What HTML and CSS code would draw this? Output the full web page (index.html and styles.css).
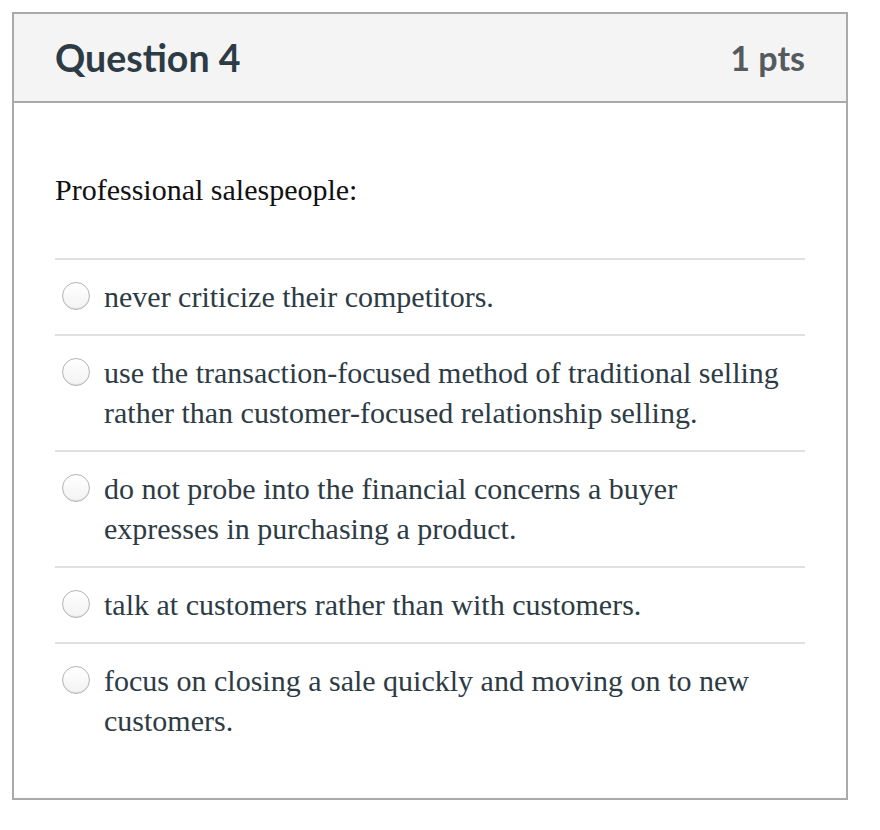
FILE: index.html
```html
<!DOCTYPE html>
<html>
<head>
<meta charset="utf-8">
<link rel="stylesheet" href="styles.css">
</head>
<body>
<div class="card">
  <div class="header">
    <h2 class="title">Question 4</h2>
    <span class="pts">1 pts</span>
  </div>
  <div class="content">
    <p class="question">Professional salespeople:</p>
    <div class="answers">
      <label class="answer"><span class="radio"></span><span class="text">never criticize their competitors.</span></label>
      <label class="answer"><span class="radio"></span><span class="text">use the transaction-focused method of traditional selling rather than customer-focused relationship selling.</span></label>
      <label class="answer"><span class="radio"></span><span class="text">do not probe into the financial concerns a buyer expresses in purchasing a product.</span></label>
      <label class="answer"><span class="radio"></span><span class="text">talk at customers rather than with customers.</span></label>
      <label class="answer"><span class="radio"></span><span class="text">focus on closing a sale quickly and moving on to new customers.</span></label>
    </div>
  </div>
</div>
</body>
</html>
```
FILE: styles.css
```css
html, body {
  margin: 0;
  padding: 0;
  background: #fff;
}
.card {
  margin: 12px;
  width: 836px;
  height: 788px;
  box-sizing: border-box;
  border: 2px solid #aaaaaa;
}
.header {
  height: 87px;
  background: #f4f4f4;
  border-bottom: 2px solid #aaaaaa;
  display: flex;
  align-items: center;
  justify-content: space-between;
  padding: 0 41px;
  font-family: Lato, sans-serif;
  font-weight: 700;
}
.title {
  margin: 0;
  font-size: 37.5px;
  font-weight: 700;
  color: #2d3b45;
}
.pts {
  font-size: 34px;
  color: #555a5e;
}
.content {
  padding: 67px 41px 0;
  font-family: "Liberation Serif", "Times New Roman", serif;
  font-size: 30px;
  line-height: 40px;
  color: #2d3b45;
}
.question {
  margin: 0 0 48px;
  color: #111;
}
.answers {
  display: flex;
  flex-direction: column;
}
.answer {
  display: flex;
  align-items: flex-start;
  gap: 14px;
  padding: 17px 0 17px 7px;
  border-top: 2px solid #e0e0e0;
}
.radio {
  flex: none;
  width: 28px;
  height: 28px;
  margin-top: 5px;
  box-sizing: border-box;
  border-radius: 50%;
  border: 1px solid #b4b4b4;
  background: linear-gradient(#ffffff, #f3f3f3);
  box-shadow: inset 0 -1px 1px rgba(0,0,0,0.08);
}
.text {
  flex: 1;
  padding-right: 20px;
}
```
